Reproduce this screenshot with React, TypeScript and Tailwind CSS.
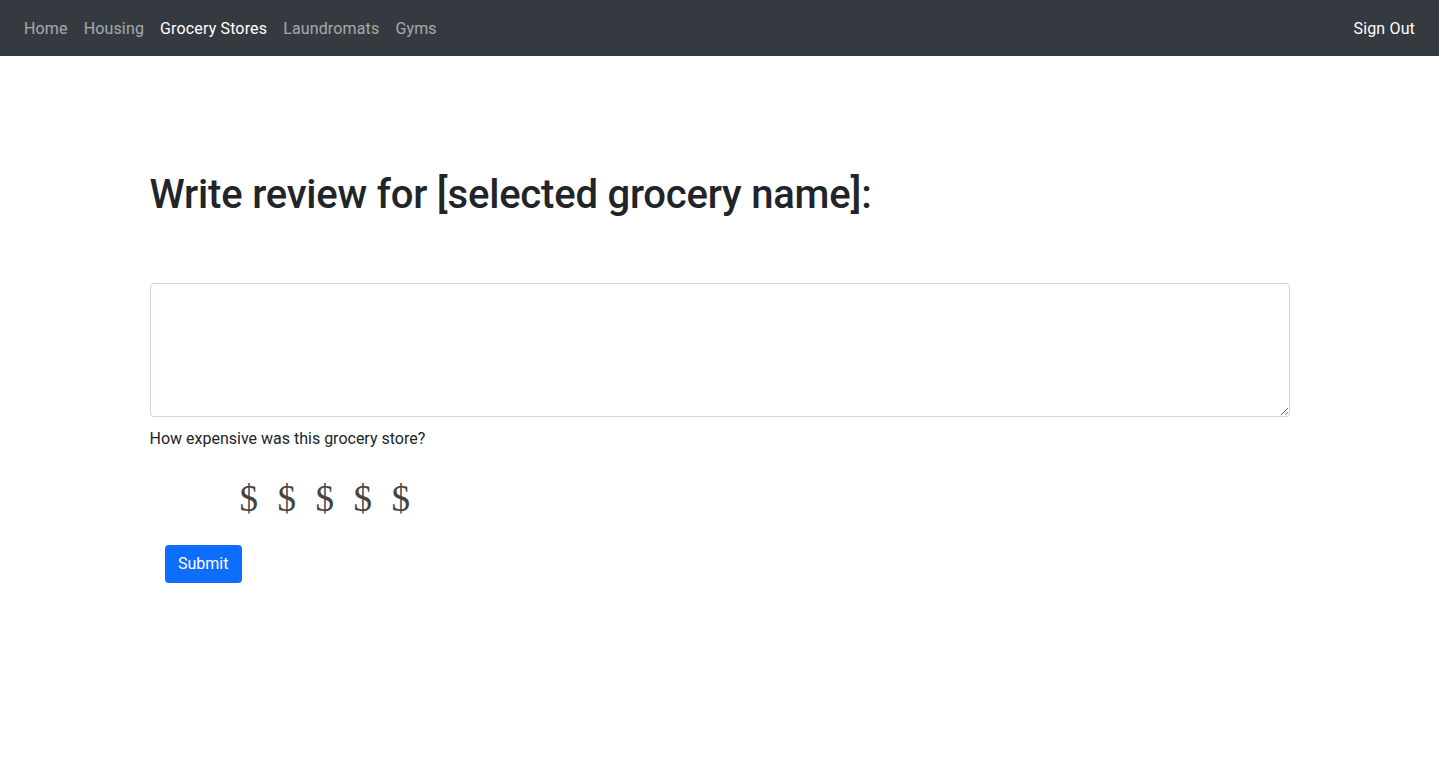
const NAV_LINKS = [
  { label: "Home", active: false },
  { label: "Housing", active: false },
  { label: "Grocery Stores", active: true },
  { label: "Laundromats", active: false },
  { label: "Gyms", active: false },
];

export default function App() {
  return (
    <div className="min-h-screen bg-white font-['Roboto','Liberation_Sans',sans-serif] text-[#212529]">
      <nav className="flex h-14 items-center justify-between bg-[#343a40] px-4 pt-[2px] tracking-[0.15px]">
        <ul className="flex items-center">
          {NAV_LINKS.map((l) => (
            <li key={l.label}>
              <a
                href="#"
                className={
                  l.active
                    ? "block px-2 text-base text-white"
                    : "block px-2 text-base text-white/55"
                }
              >
                {l.label}
              </a>
            </li>
          ))}
        </ul>
        <a href="#" className="px-2 text-base text-white">
          Sign Out
        </a>
      </nav>

      <main className="mx-auto w-[1140px] pt-[115px]">
        <h1 className="text-[40px] font-medium leading-[1.2] tracking-[-0.2px]">
          Write review for [selected grocery name]:
        </h1>

        <form className="mt-[64px]" onSubmit={(e) => e.preventDefault()}>
          <textarea className="block h-[134px] w-full rounded-[4px] border border-[#ced4da] px-3 py-1.5 text-base" />
          <p className="mt-[10px] text-base leading-6">How expensive was this grocery store?</p>

          <div className="mt-[29px] flex gap-[19.5px] pl-[90px] font-['Liberation_Serif',serif] text-[37px] leading-none text-[#444]">
            {[1, 2, 3, 4, 5].map((n) => (
              <span key={n} className="cursor-pointer">
                $
              </span>
            ))}
          </div>

          <button
            type="submit"
            className="ml-[15px] mt-[28px] h-[38px] rounded-[4px] bg-[#0d6efd] px-[13.5px] text-base text-white"
          >
            Submit
          </button>
        </form>
      </main>
    </div>
  );
}
